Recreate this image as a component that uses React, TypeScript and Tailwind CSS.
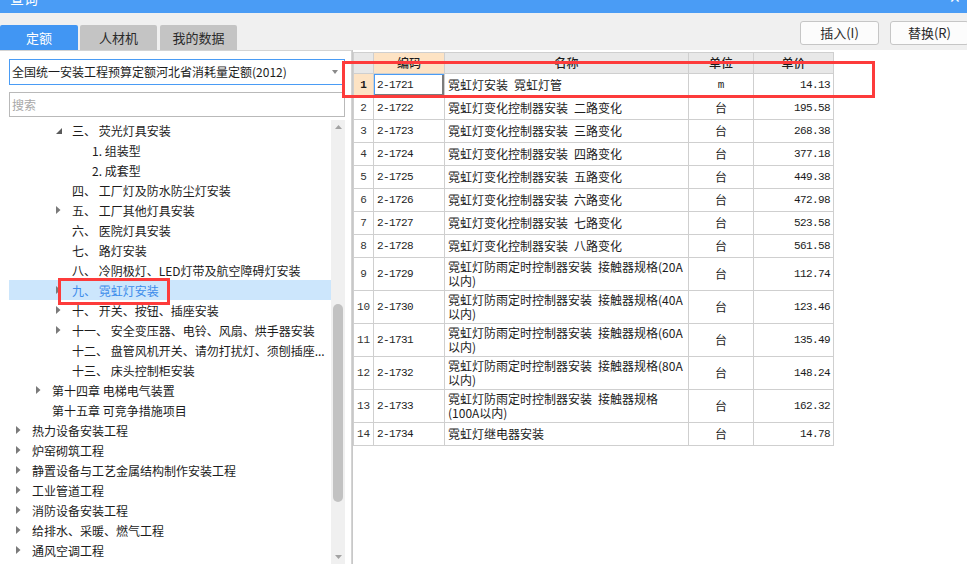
import React from "react";

const CJK = "font-['Noto_Sans_CJK_SC',sans-serif]";
const MONO = "font-['Liberation_Mono',monospace]";

type TreeRow = { lvl: 1 | 2 | 3 | 4; tri?: "down" | "right"; t: string; sel?: boolean };

const tree: TreeRow[] = [
  { lvl: 3, tri: "down", t: "三、 荧光灯具安装" },
  { lvl: 4, t: "1. 组装型" },
  { lvl: 4, t: "2. 成套型" },
  { lvl: 3, t: "四、 工厂灯及防水防尘灯安装" },
  { lvl: 3, tri: "right", t: "五、 工厂其他灯具安装" },
  { lvl: 3, t: "六、 医院灯具安装" },
  { lvl: 3, t: "七、 路灯安装" },
  { lvl: 3, t: "八、 冷阴极灯、LED灯带及航空障碍灯安装" },
  { lvl: 3, tri: "right", t: "九、 霓虹灯安装", sel: true },
  { lvl: 3, tri: "right", t: "十、 开关、按钮、插座安装" },
  { lvl: 3, tri: "right", t: "十一、 安全变压器、电铃、风扇、烘手器安装" },
  { lvl: 3, t: "十二、 盘管风机开关、请勿打扰灯、须刨插座..." },
  { lvl: 3, t: "十三、 床头控制柜安装" },
  { lvl: 2, tri: "right", t: "第十四章 电梯电气装置" },
  { lvl: 2, t: "第十五章 可竞争措施项目" },
  { lvl: 1, tri: "right", t: "热力设备安装工程" },
  { lvl: 1, tri: "right", t: "炉窑砌筑工程" },
  { lvl: 1, tri: "right", t: "静置设备与工艺金属结构制作安装工程" },
  { lvl: 1, tri: "right", t: "工业管道工程" },
  { lvl: 1, tri: "right", t: "消防设备安装工程" },
  { lvl: 1, tri: "right", t: "给排水、采暖、燃气工程" },
  { lvl: 1, tri: "right", t: "通风空调工程" },
];

const indent: Record<number, string> = {
  1: "pl-[7px]",
  2: "pl-[27px]",
  3: "pl-[47px]",
  4: "pl-[67px]",
};

type Row = { n: number; code: string; name: string[]; unit: string; price: string };

const S = "\u2002";

const rows: Row[] = [
  { n: 1, code: "2-1721", name: [`霓虹灯安装${S}霓虹灯管`], unit: "m", price: "14.13" },
  { n: 2, code: "2-1722", name: [`霓虹灯变化控制器安装${S}二路变化`], unit: "台", price: "195.58" },
  { n: 3, code: "2-1723", name: [`霓虹灯变化控制器安装${S}三路变化`], unit: "台", price: "268.38" },
  { n: 4, code: "2-1724", name: [`霓虹灯变化控制器安装${S}四路变化`], unit: "台", price: "377.18" },
  { n: 5, code: "2-1725", name: [`霓虹灯变化控制器安装${S}五路变化`], unit: "台", price: "449.38" },
  { n: 6, code: "2-1726", name: [`霓虹灯变化控制器安装${S}六路变化`], unit: "台", price: "472.98" },
  { n: 7, code: "2-1727", name: [`霓虹灯变化控制器安装${S}七路变化`], unit: "台", price: "523.58" },
  { n: 8, code: "2-1728", name: [`霓虹灯变化控制器安装${S}八路变化`], unit: "台", price: "561.58" },
  { n: 9, code: "2-1729", name: [`霓虹灯防雨定时控制器安装${S}接触器规格(20A`, "以内)"], unit: "台", price: "112.74" },
  { n: 10, code: "2-1730", name: [`霓虹灯防雨定时控制器安装${S}接触器规格(40A`, "以内)"], unit: "台", price: "123.46" },
  { n: 11, code: "2-1731", name: [`霓虹灯防雨定时控制器安装${S}接触器规格(60A`, "以内)"], unit: "台", price: "135.49" },
  { n: 12, code: "2-1732", name: [`霓虹灯防雨定时控制器安装${S}接触器规格(80A`, "以内)"], unit: "台", price: "148.24" },
  { n: 13, code: "2-1733", name: [`霓虹灯防雨定时控制器安装${S}接触器规格`, "(100A以内)"], unit: "台", price: "162.32" },
  { n: 14, code: "2-1734", name: ["霓虹灯继电器安装"], unit: "台", price: "14.78" },
];

function Tri({ dir }: { dir: "down" | "right" }) {
  if (dir === "down") {
    return (
      <svg width="6" height="6" viewBox="0 0 6 6" className="mt-[2px]">
        <polygon points="6,0 6,6 0,6" fill="#5a5a5a" />
      </svg>
    );
  }
  return (
    <svg width="5" height="8" viewBox="0 0 5 8">
      <polygon points="0,0 4.5,4 0,8" fill="#7a7a7a" />
    </svg>
  );
}

const GRID = "grid grid-cols-[20px_71px_244px_65px_80px]";

export default function App() {
  return (
    <div className={`relative w-[967px] h-[564px] overflow-hidden bg-[#f0f0f0] ${CJK} text-[12px] text-[#1c1c1c]`}>
      {/* title bar */}
      <div className="h-[13px] bg-[#4a9cf5] overflow-hidden flex justify-between">
        <span className="ml-[10px] mt-[-9px] text-[14px] leading-[14px] text-white">查询</span>
        <span className="mr-[6px] mt-[-10px] text-[14px] leading-[14px] text-white">✕</span>
      </div>

      {/* tabs + buttons */}
      <div className="h-[37px] flex justify-between">
        <div className="flex self-end h-[25px] text-[13px]">
          <div className="w-[78px] h-full rounded-t-[2px] bg-[#4196f3] text-white flex items-center justify-center">定额</div>
          <div className="ml-[2px] w-[77px] h-full rounded-t-[2px] bg-[#c4c4c4] text-[#2a2a2a] flex items-center justify-center">人材机</div>
          <div className="ml-[3px] w-[77px] h-full rounded-t-[2px] bg-[#c4c4c4] text-[#2a2a2a] flex items-center justify-center">我的数据</div>
        </div>
        <div className="flex self-start mt-[8px] mr-[-2px] gap-[11px] text-[13px]">
          <div className="w-[79px] h-[24px] rounded-[3px] border border-[#c6c6c6] bg-[#fcfcfc] flex items-center justify-center text-[#2a2a2a]">插入(I)</div>
          <div className="w-[79px] h-[24px] rounded-[3px] border border-[#c6c6c6] bg-[#fcfcfc] flex items-center justify-center text-[#2a2a2a]">替换(R)</div>
        </div>
      </div>

      {/* main */}
      <div className="flex h-[514px]">
        {/* left panel */}
        <div className="w-[352px] h-full bg-white border-r border-t border-[#d4d4d4] pl-[9px] pr-[6px] pt-[8px] flex flex-col">
          <div className="h-[27px] border border-[#4a9cf5] flex items-center justify-between pl-[2px] pr-[6px]">
            <span className="leading-[14px]">全国统一安装工程预算定额河北省消耗量定额(2012)</span>
            <svg width="6" height="4" viewBox="0 0 6 4">
              <polygon points="0,0 6,0 3,4" fill="#8a8a8a" />
            </svg>
          </div>
          <div className="mt-[7px] h-[26px] border border-[#b9b9b9] flex items-center pl-[2px] text-[#a8a8a8]">搜索</div>
          <div className="mt-[3px] flex h-[460px]">
            <div className="flex-1 flex flex-col">
              {tree.map((r, i) => (
                <div
                  key={i}
                  className={`h-[20px] flex items-center whitespace-nowrap ${indent[r.lvl]} ${r.sel ? "bg-[#cce6fc] text-[#3d8ceb]" : ""}`}
                >
                  <div className="w-[16px] flex items-center">{r.tri ? <Tri dir={r.tri} /> : null}</div>
                  <span className="leading-[14px] mt-[1px]">{r.t}</span>
                </div>
              ))}
            </div>
            <div className="w-[14px] h-full bg-[#f0f0f0] flex flex-col">
              <div className="h-[14px] flex items-center justify-center">
                <svg width="7" height="4" viewBox="0 0 7 4">
                  <polygon points="0,4 7,4 3.5,0" fill="#a3a3a3" />
                </svg>
              </div>
              <div className="h-[170px]" />
              <div className="h-[198px] mx-[2px] rounded-full bg-[#c2c2c2]" />
              <div className="flex-1" />
              <div className="h-[14px] flex items-center justify-center">
                <svg width="7" height="4" viewBox="0 0 7 4">
                  <polygon points="0,0 7,0 3.5,4" fill="#a3a3a3" />
                </svg>
              </div>
            </div>
          </div>
        </div>

        {/* right panel */}
        <div className="flex-1 h-full bg-white border-l border-[#c8c8c8] pt-[2px]">
          <div className="w-[481px] border-l border-t border-[#cfcfcf]">
            {/* header */}
            <div className={`${GRID} h-[21px]`}>
              <div className="border-r border-b border-[#cfcfcf] bg-[#e8e8e8]" />
              <div className="border-r border-b border-[#cfcfcf] bg-[#fde3c4] flex items-center justify-center font-medium">编码</div>
              <div className="border-r border-b border-[#cfcfcf] bg-[#e8e8e8] flex items-center justify-center font-medium">名称</div>
              <div className="border-r border-b border-[#cfcfcf] bg-[#e8e8e8] flex items-center justify-center font-medium">单位</div>
              <div className="border-r border-b border-[#cfcfcf] bg-[#e8e8e8] flex items-center justify-center font-medium">单价</div>
            </div>
            {rows.map((r) => {
              const two = r.name.length > 1;
              const first = r.n === 1;
              return (
                <div key={r.n} className={`${GRID} ${two ? "h-[33px]" : "h-[23px]"}`}>
                  <div
                    className={`border-r border-b border-[#cfcfcf] flex items-center justify-center ${MONO} text-[11px] ${first ? "bg-[#fde3c4] font-bold" : "text-[#333]"}`}
                  >
                    {r.n}
                  </div>
                  <div
                    className={`border-r border-b border-[#cfcfcf] flex items-center pl-[3px] ${MONO} text-[11px] tracking-[-0.6px] ${first ? "shadow-[inset_1px_1px_0_#4a9cf5,inset_-2px_-2px_0_#7c7c7c]" : ""}`}
                  >
                    {r.code}
                  </div>
                  <div
                    className={`border-r border-b border-[#cfcfcf] pl-[3px] flex ${two ? "items-start pt-[2px]" : "items-center"}`}
                  >
                    {two ? (
                      <span className="whitespace-nowrap leading-[14px]">
                        {r.name[0]}
                        <br />
                        {r.name[1]}
                      </span>
                    ) : (
                      <span className="whitespace-nowrap leading-[14px]">{r.name[0]}</span>
                    )}
                  </div>
                  <div
                    className={`border-r border-b border-[#cfcfcf] flex items-center justify-center ${r.unit === "m" ? `${MONO} text-[11px]` : ""}`}
                  >
                    {r.unit}
                  </div>
                  <div className={`border-r border-b border-[#cfcfcf] flex items-center justify-end pr-[3px] ${MONO} text-[11px] tracking-[-0.6px]`}>
                    {r.price}
                  </div>
                </div>
              );
            })}
          </div>
        </div>
      </div>

      {/* red annotation boxes */}
      <div className="absolute left-[342px] top-[61px] w-[533px] h-[37px] border-[3px] border-[#fd3b3b]" />
      <div className="absolute left-[58px] top-[278px] w-[112px] h-[27px] border-[3px] border-[#fd3b3b]" />
    </div>
  );
}
